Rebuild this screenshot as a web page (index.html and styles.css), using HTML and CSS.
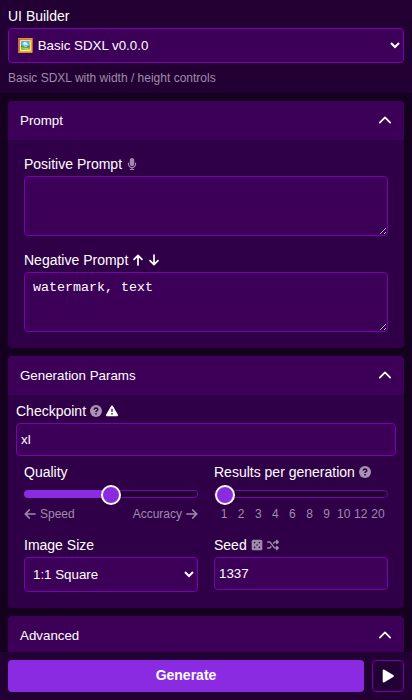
FILE: index.html
```html
<!DOCTYPE html>
<html lang="en">
<head>
<meta charset="utf-8">
<title>UI Builder</title>
<link rel="stylesheet" href="styles.css">
</head>
<body>
<header class="top">
  <label class="label" for="builder">UI Builder</label>
  <select id="builder" class="control"><option>🖼️ Basic SDXL v0.0.0</option></select>
  <p class="hint">Basic SDXL with width / height controls</p>
</header>
<main class="content">
  <section class="panel">
    <h2 class="panel-head">Prompt <svg class="chevron" viewBox="0 0 14 14"><path d="M1.800 9.600 7 4.400l5.200 5.200"/></svg></h2>
    <div class="fields">
      <div class="field">
        <label class="label" for="pos">Positive Prompt <svg class="icon muted mic" viewBox="0 0 384 512"><path d="M192 0c-53 0-96 43-96 96v160c0 53 43 96 96 96s96-43 96-96V96c0-53-43-96-96-96zM64 216c0-13-11-24-24-24s-24 11-24 24v40c0 89 66 163 152 174v34h-48c-13 0-24 11-24 24s11 24 24 24h144c13 0 24-11 24-24s-11-24-24-24h-48v-34c86-11 152-85 152-174v-40c0-13-11-24-24-24s-24 11-24 24v40c0 71-57 128-128 128S64 327 64 256z"/></svg></label>
        <textarea id="pos" class="control"></textarea>
      </div>
      <div class="field">
        <label class="label" for="neg">Negative Prompt <svg class="icon line" viewBox="0 0 12 12"><path d="M6 11V1.500M2 5.300l4-4 4 4"/></svg><svg class="icon line" viewBox="0 0 12 12"><path d="M6 1v9.500M2 6.700l4 4 4-4"/></svg></label>
        <textarea id="neg" class="control" spellcheck="false">watermark, text</textarea>
      </div>
    </div>
  </section>
  <section class="panel">
    <h2 class="panel-head">Generation Params <svg class="chevron" viewBox="0 0 14 14"><path d="M1.800 9.600 7 4.400l5.200 5.200"/></svg></h2>
    <div class="checkpoint">
      <label class="label" for="ckpt">Checkpoint <svg class="icon muted help" viewBox="0 0 12 12"><circle cx="6" cy="6" r="6"/><path class="cut" d="M4.200 4.600c.1-1 .8-1.500 1.800-1.500 1.100 0 1.800.6 1.800 1.500C7.800 5.700 6 5.700 6 7.100M6 8.100v1.300"/></svg><svg class="icon" viewBox="0 0 12 12"><path d="M6 .5c.4 0 .7.2.9.500l4.900 8.600c.4.700 0 1.600-.9 1.600H1.100c-.9 0-1.300-.9-.9-1.600L5.100 1c.2-.3.500-.5.900-.5z"/><path class="cut thin" d="M6 3.800v3M6 8.100v1.300"/></svg></label>
      <input id="ckpt" class="control" type="text" value="xl">
    </div>
    <div class="grid">
      <div class="field">
        <label class="label" for="quality">Quality</label>
        <input id="quality" class="slider half" type="range" min="0" max="10" value="5">
        <div class="scale"><span class="end"><svg class="icon line" viewBox="0 0 12 12"><path d="M11 6H1.500M5.300 2l-4 4 4 4"/></svg>Speed</span><span class="end">Accuracy<svg class="icon line" viewBox="0 0 12 12"><path d="M1 6h9.500M6.700 2l4 4-4 4"/></svg></span></div>
      </div>
      <div class="field">
        <label class="label" for="results">Results per generation <svg class="icon muted help" viewBox="0 0 12 12"><circle cx="6" cy="6" r="6"/><path class="cut" d="M4.200 4.600c.1-1 .8-1.500 1.800-1.500 1.100 0 1.800.6 1.800 1.500C7.800 5.700 6 5.700 6 7.100M6 8.100v1.300"/></svg></label>
        <input id="results" class="slider" type="range" min="0" max="9" value="0">
        <div class="scale ticks"><span>1</span><span>2</span><span>3</span><span>4</span><span>6</span><span>8</span><span>9</span><span>10</span><span>12</span><span>20</span></div>
      </div>
      <div class="field">
        <label class="label" for="size">Image Size</label>
        <select id="size" class="control"><option>1:1 Square</option></select>
      </div>
      <div class="field">
        <label class="label" for="seed">Seed <svg class="icon muted" viewBox="0 0 12 12"><rect x=".7" y=".7" width="10.600" height="10.600" rx="1.500"/><g class="dots"><circle cx="3.600" cy="3.600" r=".8"/><circle cx="8.400" cy="3.600" r=".8"/><circle cx="6" cy="6" r=".8"/><circle cx="3.600" cy="8.400" r=".8"/><circle cx="8.400" cy="8.400" r=".8"/></g></svg><svg class="icon muted" viewBox="0 0 512 512"><path d="M403.800 34.400c12-5 25.700-2.200 34.900 6.900l64 64c6 6 9.400 14.100 9.400 22.600s-3.400 16.600-9.400 22.600l-64 64c-9.200 9.200-22.900 11.900-34.900 6.900S384 204.900 384 192v-32h-32c-10.100 0-19.600 4.700-25.600 12.800L284 229.300 244 176l31.200-41.600C293.300 110.200 321.800 96 352 96h32V64c0-12.900 7.800-24.600 19.800-29.600zM164 282.700l40 53.300-31.200 41.600C154.700 401.800 126.200 416 96 416H32c-17.700 0-32-14.300-32-32s14.300-32 32-32h64c10.100 0 19.600-4.700 25.600-12.800zm274.600 188c-9.200 9.200-22.900 11.900-34.900 6.900S384 460.900 384 448v-32h-32c-30.200 0-58.700-14.200-76.800-38.400L121.600 172.800C115.600 164.700 106.100 160 96 160H32c-17.700 0-32-14.300-32-32s14.300-32 32-32h64c30.200 0 58.700 14.200 76.800 38.400l153.600 204.800c6 8.100 15.500 12.800 25.600 12.800h32v-32c0-12.900 7.800-24.600 19.800-29.600s25.700-2.200 34.900 6.900l64 64c12.500 12.500 12.500 32.800 0 45.300z"/></svg></label>
        <input id="seed" class="control" type="text" value="1337">
      </div>
    </div>
  </section>
  <section class="panel">
    <h2 class="panel-head">Advanced <svg class="chevron" viewBox="0 0 14 14"><path d="M1.800 9.600 7 4.400l5.200 5.200"/></svg></h2>
  </section>
</main>
<footer class="actions">
  <button class="generate">Generate</button>
  <button class="play" aria-label="Play"><svg viewBox="0 0 12 14"><path d="M.7 1.800C.7.900 1.600.2 2.400.7l8.800 5.200c.8.500.8 1.700 0 2.200l-8.800 5.200c-.8.500-1.700-.2-1.700-1.100z"/></svg></button>
</footer>
</body>
</html>
```
FILE: styles.css
```css
* { box-sizing: border-box; }

body {
  margin: 0;
  height: 100vh;
  display: flex;
  flex-direction: column;
  overflow: hidden;
  background: #150020;
  color: #fff;
  font-family: "Liberation Sans", Arial, sans-serif;
  font-size: 14px;
}

.top {
  flex: none;
  height: 93px;
  padding: 8px;
  background: #220033;
}

.label {
  display: flex;
  align-items: center;
  height: 16px;
  margin-bottom: 4px;
  line-height: 16px;
  white-space: nowrap;
}

.hint {
  margin: 8px 0 0;
  font-size: 12px;
  line-height: 14px;
  color: #a08cab;
}

.control {
  display: block;
  width: 100%;
  margin: 0;
  border: 1px solid #7b00b0;
  border-radius: 4px;
  background: #3d0059;
  color: #fff;
  font-family: inherit;
  font-size: 13.333px;
  outline: none;
}

select.control { height: 35px; padding: 0 4px; }
input.control { height: 33px; padding: 0 4px; }

textarea.control {
  height: 60px;
  padding: 7px 8px;
  font-family: "Liberation Mono", monospace;
  resize: vertical;
}

.content {
  flex: 1;
  min-height: 0;
  overflow: hidden;
  display: flex;
  flex-direction: column;
  gap: 8px;
  padding: 8px 8px 0;
}

.panel {
  flex: none;
  border-radius: 4px;
  overflow: hidden;
  background: #2f0047;
}

.panel-head {
  display: flex;
  align-items: center;
  justify-content: space-between;
  height: 39px;
  margin: 0;
  padding: 0 12px;
  background: #3d0059;
  font-size: 13.333px;
  font-weight: 400;
}

.chevron {
  width: 14px;
  height: 14px;
  margin: 0 -0.4px 1.5px 0;
  fill: none;
  stroke: #fff;
  stroke-width: 1.7;
  stroke-linecap: round;
  stroke-linejoin: round;
}

.fields {
  display: flex;
  flex-direction: column;
  gap: 16px;
  padding: 16px;
}

.checkpoint { padding: 8px 8px 0; }

.grid {
  display: grid;
  grid-template-columns: 1fr 1fr;
  gap: 16px;
  padding: 8px 16px 16px;
}

.icon {
  flex: none;
  width: 12px;
  height: 12px;
  margin-left: 4px;
  fill: #fff;
}

.muted { fill: #a08aac; }
.help { fill: #a893b3; }
.line { fill: none; stroke: currentColor; stroke-width: 1.7; stroke-linecap: round; stroke-linejoin: round; }
.cut { fill: none; stroke: #2f0047; stroke-width: 1.5; }
.thin { stroke-width: 1.3; }
.dots { fill: #2f0047; }

.slider {
  appearance: none;
  display: block;
  width: 100%;
  height: 8px;
  margin: 10px 0 0;
  border: 1px solid #7b00b0;
  border-radius: 4px;
  background: #220033;
}

.half {
  border-color: transparent;
  background:
    linear-gradient(#8a2be2, #8a2be2) left / 50% 100% no-repeat border-box,
    linear-gradient(#220033, #220033) padding-box,
    linear-gradient(#7b00b0, #7b00b0) border-box;
}

.slider::-webkit-slider-thumb {
  appearance: none;
  width: 20px;
  height: 20px;
  transform: translateY(1px);
  border: 2px solid #fff;
  border-radius: 50%;
  background: #8a2be2;
}

.scale {
  display: flex;
  justify-content: space-between;
  margin-top: 9px;
  height: 14px;
  line-height: 14px;
  font-size: 12px;
  color: #a08aac;
}

.end { display: flex; align-items: center; gap: 4px; }
.end .icon { margin: 0; }
.ticks { padding: 0 1.5px; }
.ticks span { flex: 1 1 0; min-width: 0; text-align: center; }

.actions {
  flex: none;
  display: flex;
  gap: 8px;
  height: 48px;
  padding: 8px;
  background: #220033;
}

.generate {
  flex: 1;
  padding: 0 0 2px;
  border: 0;
  border-radius: 4px;
  background: #8a2be2;
  color: #fff;
  font: bold 14px "Liberation Sans", Arial, sans-serif;
}

.play {
  display: flex;
  align-items: center;
  justify-content: center;
  width: 32px;
  padding: 0;
  border: 1px solid #7b00b0;
  border-radius: 4px;
  background: #220033;
}

.play svg { width: 12px; height: 14px; fill: #fff; }
```
